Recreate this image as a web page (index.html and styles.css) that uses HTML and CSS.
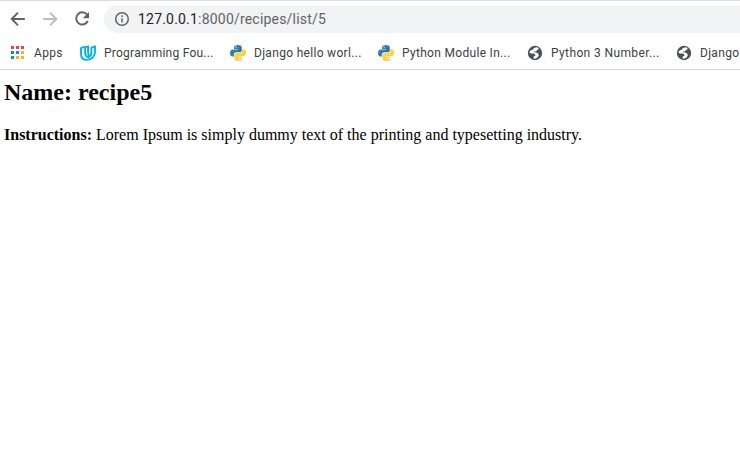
FILE: index.html
```
<!DOCTYPE html>
<html lang="en">
<head>
<meta charset="utf-8">
<title>Recipe</title>
<link rel="stylesheet" href="styles.css">
</head>
<body>
<svg class="defs" aria-hidden="true">
  <defs>
    <linearGradient id="blue" x1="0" y1="0" x2="1" y2="1"><stop offset="0" stop-color="#438fbd"/><stop offset="1" stop-color="#286594"/></linearGradient>
    <linearGradient id="yellow" x1="0" y1="0" x2="1" y2="1"><stop offset="0" stop-color="#ffe052"/><stop offset="1" stop-color="#f6c83c"/></linearGradient>
  </defs>
  <symbol id="python" viewBox="0 0 16 16">
    <ellipse cx="9" cy="15.3" rx="5" ry=".6" fill="#bbb" opacity=".6"/>
    <path fill="url(#blue)" d="M7.900 0C5 0 4 1 4 2.400v1.500h4v.5H2.500C.8 4.400 0 5.900 0 8c0 2.200.9 3.600 2.300 3.600h1.500V9.700c0-1.300 1.100-2.400 2.400-2.400h3.500c1.200 0 2.100-.9 2.100-2.100V2.500C11.800.8 10.400 0 7.900 0z"/>
    <path fill="url(#yellow)" d="M8.100 15.500c2.900 0 3.900-1 3.900-2.400v-1.600H8v-.5h5.500c1.700 0 2.500-1.400 2.500-3.400 0-2.200-.8-3.400-2.300-3.400h-1.500v1.600c0 1.500-1.100 2.200-2.300 2.200H6.300c-1.200 0-2.100.9-2.100 2.100v2.900c0 1.600 1.400 2.500 3.900 2.500z"/>
    <circle cx="6" cy="2.100" r=".7" fill="#fff"/><circle cx="10" cy="13.300" r=".7" fill="#fff"/>
  </symbol>
  <symbol id="globe" viewBox="0 0 16 16">
    <circle cx="8" cy="8" r="7.200" fill="#4d5156"/>
    <path fill="#fff" d="M9.800 2.300 7 3 5.700 4.700 3.800 5.300 2.300 7.400l1.500 1.200 3.200-.1 1.200.9.200 1.300-1.700.7-.1 2 1.600.3 2.500-1.500 1.200-2-1-1.900-2-.9-2.200-.3.300-.7 1.900.2 1.200-1.600 1.300-.8.300-1.300z"/>
  </symbol>
</svg>
<header class="browser">
  <div class="toolbar">
    <svg class="nav" viewBox="0 0 20 20"><path d="M16.800 10H4M10 3.700 3.700 10l6.300 6.300"/></svg>
    <svg class="nav disabled" viewBox="0 0 20 20"><path d="M3.200 10H16M10 3.700l6.300 6.300-6.300 6.300"/></svg>
    <svg class="nav" viewBox="0 0 20 20"><path d="M15 5.500A6.100 6.100 0 1 0 15.800 12"/><path class="solid" d="M17 3v6.300h-6.300z"/></svg>
    <div class="address">
      <svg class="info" viewBox="0 0 16 16"><circle cx="8" cy="8" r="6.300"/><path d="M8 7.200v4.200M8 4.200v1.700"/></svg>
      <span class="url"><span class="host">127.0.0.1</span>:8000/recipes/list/5</span>
    </div>
  </div>
  <nav class="bookmarks">
    <a class="bookmark apps"><svg class="icon" viewBox="0 0 16 16"><path fill="#f33f3c" d="M1 1h3v3H1zM6 1h3v3H6zM11 1h3v3h-3z"/><path fill="#12a05c" d="M1 6h3v3H1zM1 11h3v3H1z"/><path fill="#1a83f7" d="M6 6h3v3H6z"/><path fill="#fbb02d" d="M11 6h3v3h-3zM6 11h3v3H6zM11 11h3v3h-3z"/></svg><span>Apps</span></a>
    <a class="bookmark programming"><svg class="icon" viewBox="0 0 16 16"><path fill="none" stroke="#02b3e4" stroke-width="1.900" stroke-linejoin="round" d="M4.700 1.700 1 3.200V8.800C1 12.600 3 14.900 6.200 14.900c5 0 8.800-3.300 8.800-7.800V1.300l-3.600 1.300v5c0 2.200-.9 3.700-2.800 4.700C6.100 11.800 5.100 10.200 5.100 7.500V2.300l3-1v6.400c0 1.300.3 2.400.9 3.300"/></svg><span>Programming Fou...</span></a>
    <a class="bookmark hello"><svg class="icon"><use href="#python"/></svg><span>Django hello worl...</span></a>
    <a class="bookmark module"><svg class="icon"><use href="#python"/></svg><span>Python Module In...</span></a>
    <a class="bookmark number"><svg class="icon"><use href="#globe"/></svg><span>Python 3 Number...</span></a>
    <a class="bookmark"><svg class="icon"><use href="#globe"/></svg><span>Django</span></a>
  </nav>
</header>
<main>
  <h2>Name: recipe5</h2>
  <p><b>Instructions:</b> Lorem Ipsum is simply dummy text of the printing and typesetting industry.</p>
</main>
</body>
</html>
```
FILE: styles.css
```
* { box-sizing: border-box; }
body { margin: 0; background: #fff; overflow: hidden; }
.defs { display: block; width: 0; height: 0; }
.browser { height: 70px; border-top: 1px solid #dadce0; border-bottom: 1px solid #d6d8da; font-family: Roboto, sans-serif; }
.toolbar { display: flex; align-items: center; height: 36px; padding-left: 8px; }
.nav { flex: none; width: 20px; height: 20px; margin-right: 12px; fill: none; stroke: #5f6368; stroke-width: 1.9; }
.nav.disabled { stroke: #babcbe; }
.nav .solid { fill: #5f6368; stroke: none; }
.address { display: flex; align-items: center; flex: 1; height: 28px; padding-left: 10px; border-radius: 14px 0 0 14px; background: #f1f3f4; }
.info { width: 16px; height: 16px; margin-right: 8px; fill: none; stroke: #5f6368; stroke-width: 1.5; }
.url { font-size: 14px; color: #5f6368; letter-spacing: .2px; white-space: nowrap; }
.host { color: #202124; }
.bookmarks { display: flex; height: 32px; padding-left: 10px; overflow: hidden; }
.bookmark { display: flex; align-items: center; gap: 8px; flex: none; width: 149px; font-size: 12px; line-height: 16px; letter-spacing: .31px; color: #3c4043; white-space: nowrap; }
.icon { flex: none; width: 16px; height: 16px; }
.apps { width: 70px; }
.programming { width: 150px; letter-spacing: .24px; }
.hello { width: 148px; }
.number { letter-spacing: .38px; }
main { padding: 8px 4px; font-family: "Liberation Serif", serif; font-size: 16px; color: #000; }
h2 { margin: 0; font-size: 24px; line-height: 28px; }
p { margin: 20px 0 0; line-height: 18px; white-space: nowrap; }
```
